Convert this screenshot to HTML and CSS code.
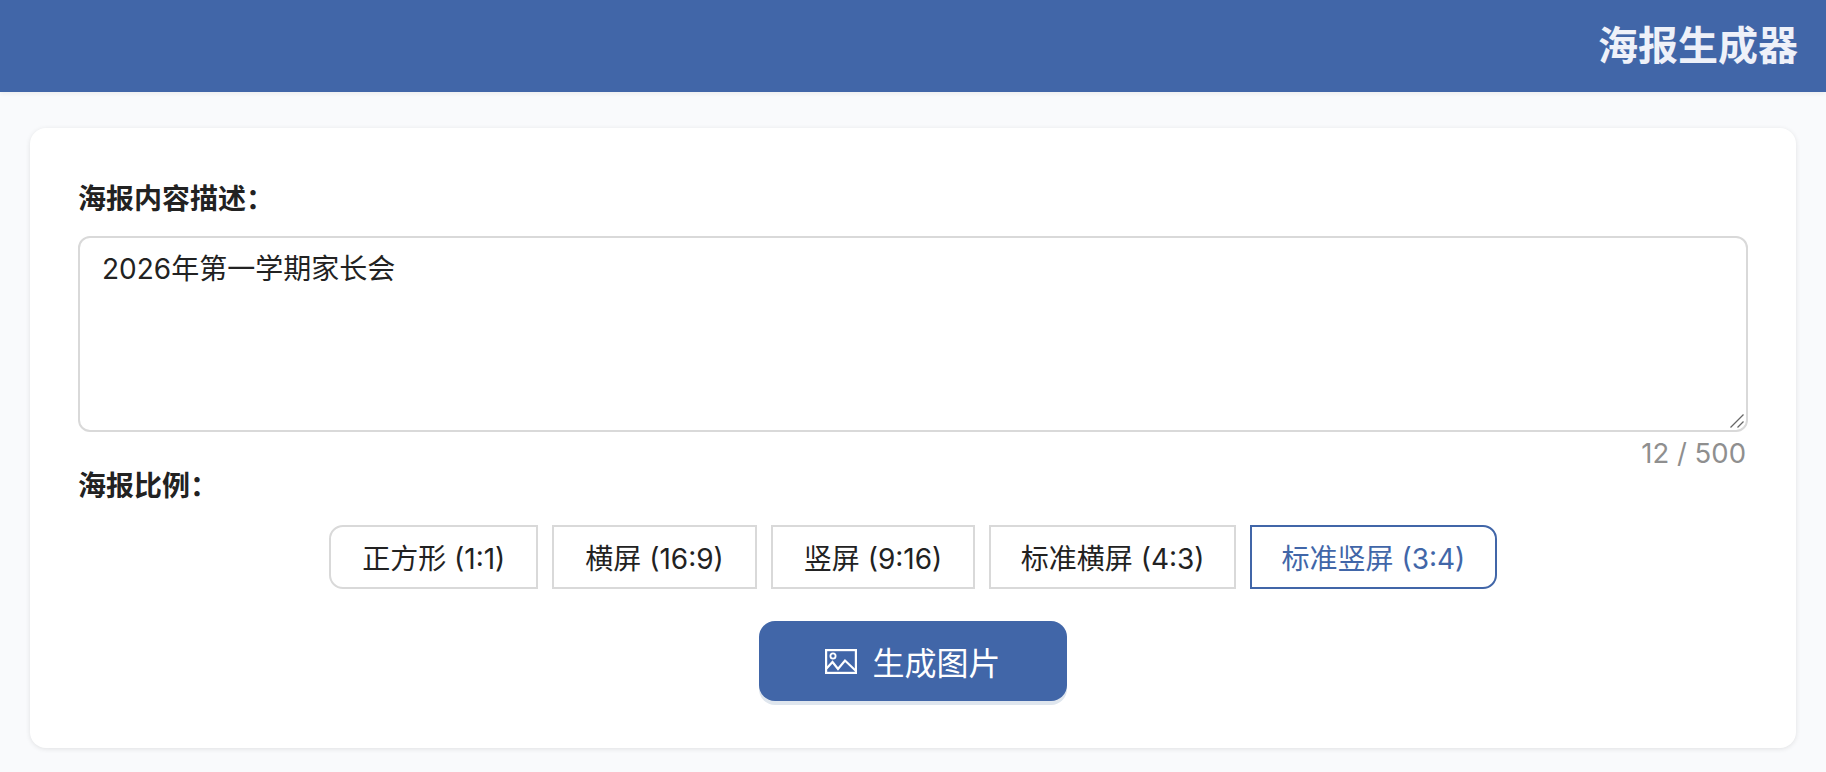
FILE: index.html
```html
<!DOCTYPE html>
<html lang="zh-CN">
<head>
<meta charset="utf-8">
<title>海报生成器</title>
<link rel="stylesheet" href="styles.css">
</head>
<body>
<header class="topbar"><h1 class="title">海报生成器</h1></header>
<main class="page">
  <section class="card">
    <label class="label" for="desc">海报内容描述：</label>
    <div class="desc-wrap">
      <textarea id="desc" class="desc" maxlength="500">2026年第一学期家长会</textarea>
      <svg class="grip" viewBox="0 0 14 14" width="14" height="14" fill="none" stroke="#666" stroke-width="1.3">
        <path d="M0.5 13.5 L13.5 0.5"/>
        <path d="M7.5 13.5 L13.5 7.5"/>
      </svg>
    </div>
    <div class="count">12 / 500</div>
    <div class="label label-ratio">海报比例：</div>
    <div class="ratios">
      <button class="ratio first" type="button">正方形 (1:1)</button>
      <button class="ratio" type="button">横屏 (16:9)</button>
      <button class="ratio" type="button">竖屏 (9:16)</button>
      <button class="ratio wide" type="button">标准横屏 (4:3)</button>
      <button class="ratio wide last active" type="button">标准竖屏 (3:4)</button>
    </div>
    <div class="actions">
      <button class="generate" type="button">
        <svg class="icon" viewBox="0 0 32 25" width="32" height="25" fill="none" stroke="#fff" stroke-width="2.2">
          <rect x="1.1" y="1.1" width="29.8" height="22.8"/>
          <circle cx="8" cy="7" r="2.6" stroke-width="1.8"/>
          <path d="M1.5 19.5 L7.5 13 L13 20 L20 11.5 L30.5 21.5"/>
        </svg>
        <span>生成图片</span>
      </button>
    </div>
  </section>
</main>
</body>
</html>
```
FILE: styles.css
```css
* { box-sizing: border-box; }
html, body { margin: 0; height: 100%; }
body {
  background: #f9fafc;
  color: #222;
  font-family: Inter, "Noto Sans CJK SC", sans-serif;
  overflow: hidden;
}
.topbar {
  height: 92px;
  background: #4166a8;
  display: flex;
  align-items: center;
  justify-content: flex-end;
  padding: 0 28px;
  box-shadow: 0 2px 4px rgba(0,0,0,.05);
}
.title {
  margin: 0;
  font-size: 40px;
  line-height: 1;
  font-weight: 700;
  color: #eef1f9;
}
.page { padding: 36px 30px 0; }
.card {
  height: 620px;
  background: #fff;
  border-radius: 16px;
  box-shadow: 0 1px 5px rgba(0,0,0,.1);
  padding: 51px 48px 0 48px;
}
.label {
  display: block;
  font-size: 28px;
  line-height: 40px;
  font-weight: 700;
  color: #222;
}
.desc-wrap { position: relative; margin-top: 17px; }
.desc {
  display: block;
  width: 100%;
  height: 196px;
  padding: 11px 22px;
  border: 2px solid #d9d9d9;
  border-radius: 12px;
  font: inherit;
  font-size: 28px;
  line-height: 40px;
  color: #222;
  background: #fff;
  resize: none;
  outline: none;
}
.grip { position: absolute; right: 4px; bottom: 4px; }
.count {
  font-size: 27.5px;
  line-height: 36px;
  margin-top: 3px;
  text-align: right;
  color: #8f8f8f;
  padding-right: 2px;
}
.label-ratio { margin-top: -5px; }
.ratios {
  display: flex;
  justify-content: center;
  gap: 14px;
  margin-top: 19px;
}
.ratio {
  height: 64px;
  padding: 0 31px;
  border: 2px solid #d9d9d9;
  border-radius: 0;
  background: #fff;
  font: inherit;
  font-size: 28px;
  color: #222;
}
.ratio.wide { padding: 0 29.5px; }
.ratio.first { border-radius: 14px 0 0 14px; }
.ratio.last { border-radius: 0 14px 14px 0; }
.ratio.active { border-color: #4166a8; color: #4166a8; }
.actions { display: flex; justify-content: center; margin-top: 32px; }
.generate {
  width: 308px;
  height: 80px;
  display: flex;
  align-items: center;
  justify-content: center;
  gap: 15px;
  border: 0;
  border-radius: 16px;
  background: #4166a8;
  color: #fff;
  font: inherit;
  font-size: 32px;
  box-shadow: 0 4px 0 #dfe6ee;
}
.icon { display: block; flex: none; }
```
